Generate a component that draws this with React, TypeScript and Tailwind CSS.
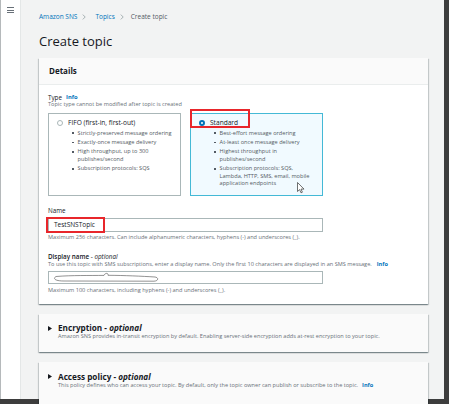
import React from "react";

function Bullet({ children }: { children: React.ReactNode }) {
  return (
    <div className="flex items-start">
      <span className="mt-[2.9px] ml-[23px] mr-[4px] h-[1.6px] w-[1.6px] shrink-0 bg-[#545b64]" />
      <span className="leading-[7.3px]">{children}</span>
    </div>
  );
}

function Chevron() {
  return (
    <svg width="4" height="6" viewBox="0 0 4 6" className="mx-[5px]">
      <path d="M0.8 0.6 L3.2 3 L0.8 5.4" fill="none" stroke="#879596" strokeWidth="0.7" />
    </svg>
  );
}

function Triangle() {
  return (
    <svg width="4" height="5" viewBox="0 0 4 5" className="mr-[6px] shrink-0">
      <polygon points="0,0 4,2.5 0,5" fill="#16191f" />
    </svg>
  );
}

export default function App() {
  return (
    <div className="w-[449px] h-[404px] overflow-hidden bg-white font-['Open_Sans','Noto_Sans',sans-serif] text-[#16191f]">
      <div className="flex w-[444px] h-[399px] border-l border-[#b5b9bb] shadow-[1px_1px_1px_4px_#3d3d3d]">
        {/* sidebar */}
        <div className="w-[20px] shrink-0 bg-white border-r border-[#e4e7e7] pt-[7px] pl-[6px]">
          <div className="flex flex-col gap-[1.6px] w-[6.5px]">
            <span className="h-[1px] bg-[#687078]" />
            <span className="h-[1px] bg-[#687078]" />
            <span className="h-[1px] bg-[#687078]" />
          </div>
        </div>
        {/* main */}
        <div className="flex-1 bg-[#f2f3f3] pl-[18px]">
          {/* breadcrumb */}
          <div className="mt-[13px] h-[8px] flex items-center text-[6.5px] leading-[8px]">
            <span className="text-[#0073bb]">Amazon SNS</span>
            <Chevron />
            <span className="ml-[4px] text-[#0073bb]">Topics</span>
            <Chevron />
            <span className="ml-[2px] text-[#545b64]">Create topic</span>
          </div>
          <div className="mt-[12px] h-[16px] text-[13px] leading-[16px]">Create topic</div>

          {/* details card */}
          <div className="mt-[9px] w-[389px] bg-white shadow-[0_1px_1px_0_rgba(0,28,36,0.3),1px_1px_1px_0_rgba(0,28,36,0.15),-1px_1px_1px_0_rgba(0,28,36,0.15)]">
            <div className="h-[27px] flex items-center px-[10px] bg-[#fafafa] border-b border-[#eaeded]">
              <span className="text-[8px] font-bold">Details</span>
            </div>
            <div className="pl-[9px] pt-[8.5px] pb-[9.5px]">
              <div className="h-[7.5px] leading-[7.5px] text-[6.3px] flex items-center">
                <span>Type</span>
                <span className="ml-[4px] text-[#0073bb] font-bold text-[5.8px]">Info</span>
              </div>
              <div className="h-[7.5px] leading-[7.5px] text-[5.6px] text-[#687078]">
                Topic type cannot be modified after topic is created
              </div>

              <div className="mt-[4px] flex gap-[9.5px]">
                {/* FIFO */}
                <div className="w-[132.5px] h-[83.5px] border border-[#aab7b8] bg-white pt-[5px]">
                  <div className="flex items-center h-[8px] pl-[8px]">
                    <span className="w-[6px] h-[6px] rounded-full border border-[#aab7b8] bg-white shrink-0" />
                    <span className="ml-[5px] text-[6.6px] leading-[8px]">FIFO (first-in, first-out)</span>
                  </div>
                  <div className="mt-[3px] flex flex-col gap-[2.2px] text-[5.6px] text-[#545b64]">
                    <Bullet>Strictly-preserved message ordering</Bullet>
                    <Bullet>Exactly-once message delivery</Bullet>
                    <Bullet>
                      High throughput, up to 300
                      <br />
                      publishes/second
                    </Bullet>
                    <Bullet>Subscription protocols: SQS</Bullet>
                  </div>
                </div>
                {/* Standard */}
                <div className="relative w-[132.5px] h-[83.5px] border border-[#44b9d6] bg-[#f1faff] pt-[5px]">
                  <div className="flex items-center h-[8px] pl-[8px]">
                    <span className="w-[6px] h-[6px] rounded-full border-[2px] border-[#0073bb] bg-white shrink-0" />
                    <span className="ml-[5px] text-[6.6px] leading-[8px]">Standard</span>
                  </div>
                  <div className="mt-[3px] flex flex-col gap-[2.2px] text-[5.6px] text-[#545b64]">
                    <Bullet>Best-effort message ordering</Bullet>
                    <Bullet>At-least once message delivery</Bullet>
                    <Bullet>
                      Highest throughput in
                      <br />
                      publishes/second
                    </Bullet>
                    <Bullet>
                      Subscription protocols: SQS,
                      <br />
                      Lambda, HTTP, SMS, email, mobile
                      <br />
                      application endpoints
                    </Bullet>
                  </div>
                  <div className="absolute left-[-1px] top-[-5px] w-[60px] h-[19px] border-[2px] border-[#e8262b]" />
                  <svg className="absolute left-[106px] top-[68px]" width="8" height="12" viewBox="0 0 8 12">
                    <path d="M0.5 0.5 L0.5 9.5 L2.6 7.6 L4 10.8 L5.4 10.2 L4 7.1 L7 7.1 Z" fill="#fff" stroke="#333" strokeWidth="0.7" strokeLinejoin="round" />
                  </svg>
                </div>
              </div>

              <div className="mt-[11.25px] h-[7.5px] leading-[7.5px] text-[6.3px]">Name</div>
              <div className="relative mt-[3.25px] w-[275px] h-[14px] border border-[#aab7b8] bg-white flex items-center pl-[5px] text-[6.5px]">
                TestSNSTopic
                <div className="absolute left-[-3px] top-[-2px] w-[59px] h-[16px] border-[2px] border-[#e8262b]" />
              </div>
              <div className="mt-[2px] h-[7.5px] leading-[7.5px] text-[5.6px] text-[#687078]">
                Maximum 256 characters. Can include alphanumeric characters, hyphens (-) and underscores (_).
              </div>

              <div className="mt-[11.5px] h-[7.5px] leading-[7.5px] text-[6.3px]">
                <span className="font-semibold">Display name</span>
                <span> - </span>
                <span className="italic">optional</span>
              </div>
              <div className="h-[7.5px] leading-[7.5px] text-[5.6px] text-[#687078] flex whitespace-nowrap">
                <span>To use this topic with SMS subscriptions, enter a display name. Only the first 10 characters are displayed in an SMS message.</span>
                <span className="ml-[5px] text-[#0073bb] font-bold">Info</span>
              </div>
              <div className="relative mt-[3px] w-[275px] h-[13px] border border-[#aab7b8] bg-white">
                <svg className="absolute left-[3px] top-[0px]" width="108" height="11" viewBox="0 0 108 11">
                  <path
                    d="M4 4.5 C20 3.2 38 3.6 52 3.4 C53 0.8 56.5 0.6 56 3.3 C72 3.4 90 4.2 103 5 C107 5.6 106.5 9 102 9.2 L12 9 C2 9 1 6.2 4 4.5"
                    fill="none"
                    stroke="#4a4a4a"
                    strokeWidth="0.6"
                  />
                </svg>
              </div>
              <div className="mt-[2.5px] h-[7.5px] leading-[7.5px] text-[5.6px] text-[#687078]">
                Maximum 100 characters, including hyphens (-) and underscores (_).
              </div>
            </div>
          </div>

          {/* Encryption */}
          <div className="mt-[10.5px] w-[389px] h-[38px] bg-[#fafafa] pl-[9px] pt-[9px] shadow-[0_1px_1px_0_rgba(0,28,36,0.3),1px_1px_1px_0_rgba(0,28,36,0.15),-1px_1px_1px_0_rgba(0,28,36,0.15)]">
            <div className="flex items-center h-[10px]">
              <Triangle />
              <span className="text-[8.2px] font-bold leading-[10px]">
                Encryption - <span className="italic">optional</span>
              </span>
            </div>
            <div className="pl-[10px] h-[7.5px] leading-[7.5px] text-[5.6px] text-[#687078] whitespace-nowrap">
              Amazon SNS provides in-transit encryption by default. Enabling server-side encryption adds at-rest encryption to your topic.
            </div>
          </div>

          {/* Access policy */}
          <div className="mt-[10px] w-[389px] h-[50px] bg-[#fafafa] pl-[9px] pt-[9.5px] shadow-[0_1px_1px_0_rgba(0,28,36,0.3),1px_1px_1px_0_rgba(0,28,36,0.15),-1px_1px_1px_0_rgba(0,28,36,0.15)]">
            <div className="flex items-center h-[10px]">
              <Triangle />
              <span className="text-[8.2px] font-bold leading-[10px]">
                Access policy - <span className="italic">optional</span>
              </span>
            </div>
            <div className="pl-[10px] h-[7.5px] leading-[7.5px] text-[5.6px] text-[#687078] flex whitespace-nowrap">
              <span>This policy defines who can access your topic. By default, only the topic owner can publish or subscribe to the topic.</span>
              <span className="ml-[4px] text-[#0073bb] font-bold">Info</span>
            </div>
          </div>
        </div>
      </div>
    </div>
  );
}
